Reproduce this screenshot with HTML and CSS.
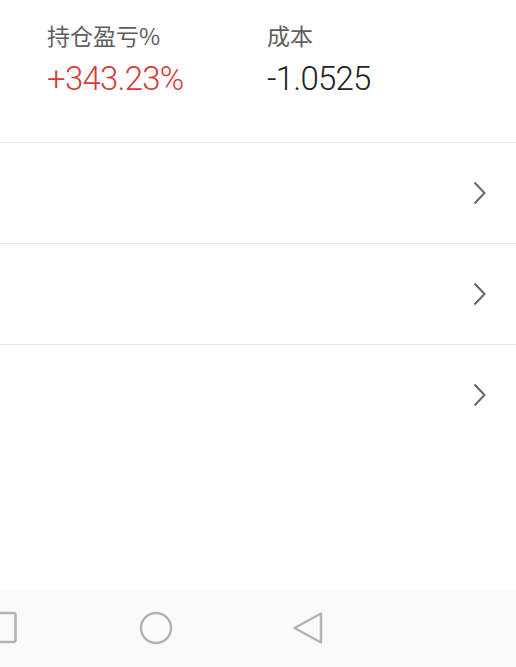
FILE: index.html
```html
<!DOCTYPE html>
<html lang="zh-CN">
<head>
    <meta charset="UTF-8">
    <meta name="viewport" content="width=device-width, initial-scale=1.0">
    <title>持仓</title>
    <link rel="stylesheet" href="styles.css">
</head>
<body>
    <div class="page">
        <div class="summary">
            <div class="stat stat-profit">
                <div class="stat-label">持仓盈亏%</div>
                <div class="stat-value up">+343.23%</div>
            </div>
            <div class="stat">
                <div class="stat-label">成本</div>
                <div class="stat-value">-1.0525</div>
            </div>
        </div>
        <div class="list">
            <div class="list-row">
                <svg class="chevron" width="16" height="24" viewBox="0 0 16 24"><path d="M2.5 1.5 L12.5 12 L2.5 22.5" /></svg>
            </div>
            <div class="list-row">
                <svg class="chevron" width="16" height="24" viewBox="0 0 16 24"><path d="M2.5 1.5 L12.5 12 L2.5 22.5" /></svg>
            </div>
            <div class="list-row last">
                <svg class="chevron" width="16" height="24" viewBox="0 0 16 24"><path d="M2.5 1.5 L12.5 12 L2.5 22.5" /></svg>
            </div>
        </div>
        <div class="spacer"></div>
        <div class="navbar">
            <svg class="nav-icon nav-recent" width="40" height="40" viewBox="0 0 40 40"><rect x="5.5" y="5" width="29" height="29" rx="2" /></svg>
            <svg class="nav-icon" width="40" height="40" viewBox="0 0 40 40"><circle cx="20" cy="20" r="15" /></svg>
            <svg class="nav-icon" width="40" height="40" viewBox="0 0 40 40"><path d="M30 5.5 L30 34.5 L3.5 20 Z" /></svg>
        </div>
    </div>
</body>
</html>
```

FILE: styles.css
```css
body {
    margin: 0;
    background-color: #fff;
    font-family: Roboto, "Noto Sans CJK SC", sans-serif;
}
.page {
    display: flex;
    flex-direction: column;
    height: 667px;
    overflow: hidden;
}
.summary {
    display: flex;
    padding: 19px 0 0 47px;
    height: 123px;
    border-bottom: 1px solid #e6e6e6;
}
.stat-profit {
    width: 220px;
}
.stat-label {
    font-family: "Noto Sans CJK SC", sans-serif;
    font-size: 23px;
    line-height: 32px;
    color: #5e5e5e;
}
.stat-value {
    font-size: 33px;
    font-weight: 300;
    line-height: 40px;
    letter-spacing: -0.75px;
    color: #222;
    margin-top: 8px;
}
.stat-value.up {
    color: #d33c3c;
}
.list-row {
    display: flex;
    justify-content: flex-end;
    align-items: center;
    height: 100px;
    padding-right: 28px;
    border-bottom: 1px solid #e6e6e6;
}
.list-row.last {
    border-bottom: none;
}
.chevron path {
    fill: none;
    stroke: #666;
    stroke-width: 2;
}
.spacer {
    flex: 1;
}
.navbar {
    display: flex;
    align-items: center;
    gap: 115px;
    height: 78px;
    background-color: #fafafa;
}
.nav-recent {
    margin-left: -19px;
}
.nav-icon rect,
.nav-icon circle,
.nav-icon path {
    fill: none;
    stroke: #b3b3b3;
    stroke-width: 2.5;
    stroke-linejoin: round;
}
```
